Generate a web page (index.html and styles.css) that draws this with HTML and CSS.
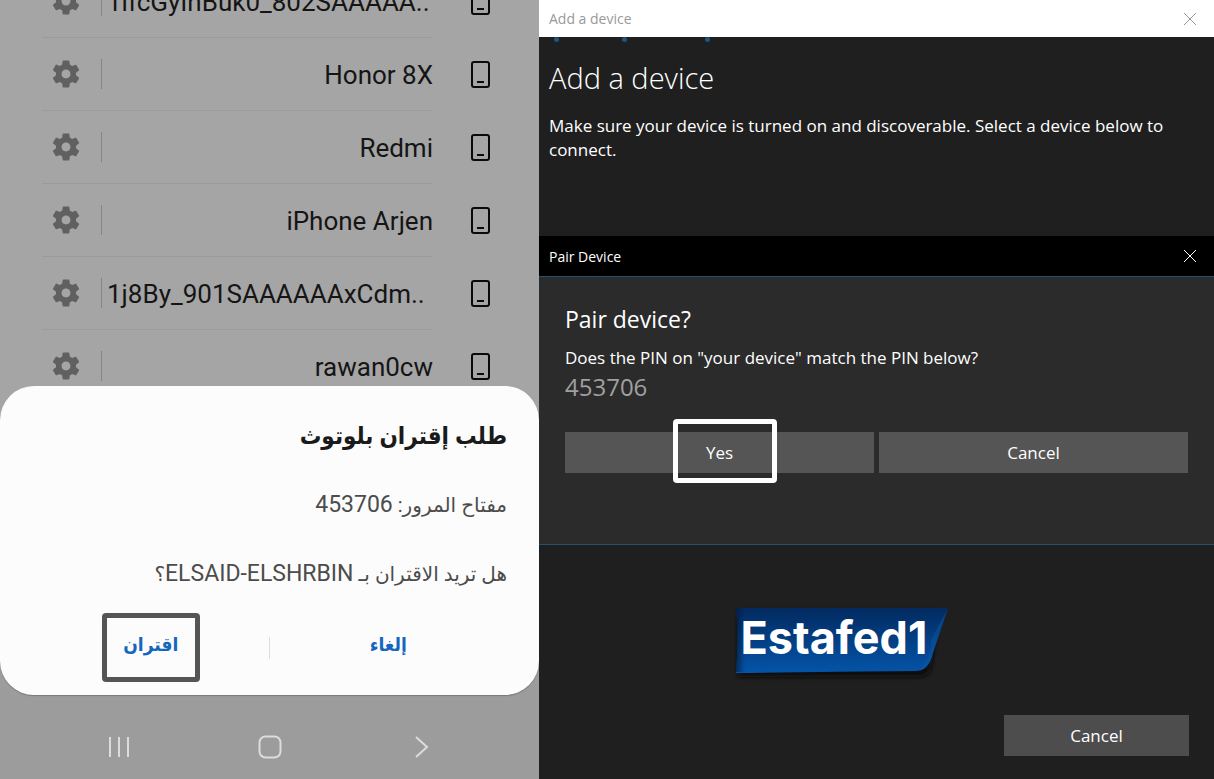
FILE: index.html
```html
<!DOCTYPE html>
<html lang="en">

<head>
  <meta charset="UTF-8" />
  <meta name="viewport" content="width=device-width, initial-scale=1" />
  <title>Pair Device</title>
  <link rel="stylesheet" href="styles.css">
</head>

<body>
  <svg class="sprite" aria-hidden="true">
    <symbol id="gear" viewBox="2 2 20 20">
      <path d="M19.14 12.94c.04-.3.06-.61.06-.94 0-.32-.02-.64-.07-.94l2.03-1.58c.18-.14.23-.41.12-.61l-1.92-3.32c-.12-.22-.37-.29-.59-.22l-2.39.96c-.5-.38-1.03-.7-1.62-.94l-.36-2.54c-.04-.24-.24-.41-.48-.41h-3.84c-.24 0-.43.17-.47.41l-.36 2.54c-.59.24-1.13.57-1.62.94l-2.39-.96c-.22-.08-.47 0-.59.22L2.74 8.87c-.12.21-.08.47.12.61l2.03 1.58c-.05.3-.09.63-.09.94s.02.64.07.94l-2.03 1.58c-.18.14-.23.41-.12.61l1.92 3.32c.12.22.37.29.59.22l2.39-.96c.5.38 1.03.7 1.62.94l.36 2.54c.05.24.24.41.48.41h3.84c.24 0 .44-.17.47-.41l.36-2.54c.59-.24 1.13-.56 1.62-.94l2.39.96c.22.08.47 0 .59-.22l1.92-3.32c.12-.22.07-.47-.12-.61l-2.01-1.58zM12 15.2c-1.760 0-3.200-1.440-3.200-3.200s1.440-3.200 3.200-3.200 3.200 1.440 3.200 3.200-1.440 3.200-3.200 3.200z" />
    </symbol>
    <symbol id="phone-icon" viewBox="0 0 20 28">
      <rect x="1" y="1" width="17" height="25" rx="2" fill="none" stroke="#0a0a0a" stroke-width="2" />
      <path d="M6 21h7" stroke="#0a0a0a" stroke-width="2" />
    </symbol>
    <symbol id="close" viewBox="0 0 14 14">
      <path d="M1 1l12 12M13 1L1 13" fill="none" stroke="currentColor" />
    </symbol>
  </svg>

  <main class="screens">
    <section class="phone">
      <ul class="devices">
        <li class="device">
          <div class="device-main">
            <button class="gear" aria-label="Settings"><svg><use href="#gear" /></svg></button>
            <span class="device-name long">1lfcGyIhBuk0_802SAAAAA..</span>
          </div>
          <svg class="device-icon"><use href="#phone-icon" /></svg>
        </li>
        <li class="device">
          <div class="device-main">
            <button class="gear" aria-label="Settings"><svg><use href="#gear" /></svg></button>
            <span class="device-name">Honor 8X</span>
          </div>
          <svg class="device-icon"><use href="#phone-icon" /></svg>
        </li>
        <li class="device">
          <div class="device-main">
            <button class="gear" aria-label="Settings"><svg><use href="#gear" /></svg></button>
            <span class="device-name">Redmi</span>
          </div>
          <svg class="device-icon"><use href="#phone-icon" /></svg>
        </li>
        <li class="device">
          <div class="device-main">
            <button class="gear" aria-label="Settings"><svg><use href="#gear" /></svg></button>
            <span class="device-name">iPhone Arjen</span>
          </div>
          <svg class="device-icon"><use href="#phone-icon" /></svg>
        </li>
        <li class="device">
          <div class="device-main">
            <button class="gear" aria-label="Settings"><svg><use href="#gear" /></svg></button>
            <span class="device-name long">1j8By_901SAAAAAAxCdm..</span>
          </div>
          <svg class="device-icon"><use href="#phone-icon" /></svg>
        </li>
        <li class="device">
          <div class="device-main">
            <button class="gear" aria-label="Settings"><svg><use href="#gear" /></svg></button>
            <span class="device-name">rawan0cw</span>
          </div>
          <svg class="device-icon"><use href="#phone-icon" /></svg>
        </li>
      </ul>

      <div class="sheet" lang="ar" dir="rtl">
        <h2>طلب إقتران بلوتوث</h2>
        <p>مفتاح المرور: <span class="latin">453706</span></p>
        <p>هل تريد الاقتران بـ <span class="latin">ELSAID-ELSHRBIN</span>؟</p>
        <div class="sheet-actions">
          <button>إلغاء</button>
          <button class="marked">اقتران</button>
        </div>
      </div>

      <nav class="phone-nav">
        <button aria-label="Recents">
          <svg width="24" height="24" viewBox="0 0 24 24"><path d="M3 2v20M12 2v20M21 2v20" /></svg>
        </button>
        <button aria-label="Home">
          <svg width="24" height="24" viewBox="0 0 24 24"><rect x="1.500" y="1.500" width="21" height="21" rx="6" /></svg>
        </button>
        <button aria-label="Back">
          <svg width="24" height="24" viewBox="0 0 24 24"><path d="M7 2l11 10L7 22" /></svg>
        </button>
      </nav>
    </section>

    <section class="window">
      <header class="titlebar">
        <span>Add a device</span>
        <button aria-label="Close"><svg><use href="#close" /></svg></button>
      </header>

      <div class="intro">
        <!-- progress dots running along the top edge -->
        <div class="dots"><i></i><i></i><i></i></div>
        <h1>Add a device</h1>
        <p>Make sure your device is turned on and discoverable. Select a device below to connect.</p>
      </div>

      <div class="pair">
        <header class="pair-bar">
          <span>Pair Device</span>
          <button aria-label="Close"><svg><use href="#close" /></svg></button>
        </header>
        <div class="pair-body">
          <h2>Pair device?</h2>
          <p>Does the PIN on "your device" match the PIN below?</p>
          <p class="pin">453706</p>
          <div class="pair-actions">
            <button class="btn yes">Yes</button>
            <button class="btn">Cancel</button>
          </div>
        </div>
      </div>

      <footer class="window-footer">
        <div class="logo">
          <svg viewBox="0 0 214 72" aria-hidden="true">
            <defs>
              <linearGradient id="blue" x1="0" y1="0" x2="0" y2="1">
                <stop offset="0" stop-color="#032a60" />
                <stop offset="1" stop-color="#0454a8" />
              </linearGradient>
              <linearGradient id="edge" x1="0" y1="0" x2="1" y2="0">
                <stop offset="0" stop-color="#021a3c" stop-opacity="0.7" />
                <stop offset="1" stop-color="#021a3c" stop-opacity="0" />
              </linearGradient>
              <filter id="soft" x="-10%" y="-20%" width="120%" height="150%">
                <feGaussianBlur stdDeviation="2" />
              </filter>
            </defs>
            <path d="M3 4h202l-9 58q-3 8-12 8H3z" fill="#0c0c0c" filter="url(#soft)" />
            <path d="M1 1H213L198 46Q194 64 180 64Q90 65 1 66Q4 30 1 1z" fill="url(#blue)" />
            <path d="M1 1H10V65H1Q4 30 1 1z" fill="url(#edge)" />
            <path d="M213 1L198 46Q194 62 184 64Q197 50 196 33Z" fill="#0b5cb0" opacity="0.4" />
          </svg>
          <span>Estafed1</span>
        </div>
        <button class="btn">Cancel</button>
      </footer>
    </section>
  </main>
</body>

</html>
```
FILE: styles.css
```css
* {
  box-sizing: border-box;
}

body {
  margin: 0;
}

h1,
h2,
p,
ul {
  margin: 0;
  padding: 0;
}

button {
  border: 0;
  padding: 0;
  background: none;
  font: inherit;
  color: inherit;
}

.sprite {
  display: none;
}

.screens {
  display: grid;
  grid-template-columns: 539fr 675fr;
  min-height: 100vh;
}

/* phone */

.phone {
  position: relative;
  display: flex;
  flex-direction: column;
  justify-content: space-between;
  overflow: hidden;
  background: linear-gradient(#a5a5a5 50%, #9c9c9c 90%);
  font-family: Roboto, "DejaVu Sans Condensed", "DejaVu Sans", sans-serif;
}

/* list is scrolled by half a row */
.devices {
  margin-top: -35px;
  list-style: none;
}

.device {
  display: flex;
  align-items: center;
  height: 73px;
  padding: 0 48px 0 42px;
}

.device-main {
  flex: 1;
  display: flex;
  align-items: center;
  height: 100%;
  min-width: 0;
  border-bottom: 1px solid #9b9b9b;
}

.gear {
  display: flex;
  padding: 0 21px 0 10px;
  height: 30px;
  align-items: center;
  border-right: 1px solid #858585;
}

.gear svg {
  width: 28px;
  height: 28px;
  fill: #606060;
}

.device-name {
  flex: 1;
  padding-top: 2px;
  font-size: 26px;
  text-align: right;
  white-space: nowrap;
  color: #151515;
}

.device-name.long {
  padding-left: 5px;
  text-align: left;
}

.device-icon {
  flex: none;
  width: 20px;
  height: 28px;
  margin-left: 38px;
}

.sheet {
  position: absolute;
  left: 0;
  right: 0;
  bottom: 84px;
  padding: 32px 32px 13px;
  border-radius: 34px;
  background: #fcfcfc;
  box-shadow: 0 1px 1px #777;
  color: #4c4c4c;
}

.sheet h2 {
  font-size: 24px;
  line-height: 36px;
  color: #1a1a1a;
}

.sheet p {
  margin-top: 33px;
  font-family: Roboto, "DejaVu Sans", sans-serif;
  font-size: 20px;
  line-height: 36px;
}

.sheet .latin {
  font-size: 23px;
}

.sheet-actions {
  display: grid;
  grid-template-columns: 1fr 1fr;
  justify-items: center;
  margin-top: 21px;
  background: linear-gradient(#ddd, #ddd) center / 1px 22px no-repeat;
  font-size: 19px;
  font-weight: bold;
  color: #1567bd;
}

.sheet-actions button {
  min-width: 98px;
  height: 69px;
  padding-bottom: 6px;
}

.sheet-actions .marked {
  border: 5px solid #555;
  border-radius: 4px;
}

.phone-nav {
  display: grid;
  grid-template-columns: repeat(3, 1fr);
  justify-items: center;
  padding: 0 43px 20px;
}

.phone-nav button {
  display: flex;
}

.phone-nav svg {
  fill: none;
  stroke: #dcdcdc;
  stroke-width: 2;
}

/* desktop window */

.window {
  display: flex;
  flex-direction: column;
  background: #1f1f1f;
  font-family: "Open Sans", "Noto Sans", sans-serif;
  color: #fff;
}

.titlebar,
.pair-bar {
  display: flex;
  align-items: center;
  justify-content: space-between;
  padding: 0 17px 0 10px;
  font-size: 14px;
}

.titlebar {
  height: 37px;
  background: #fff;
  color: #999;
}

.titlebar button,
.pair-bar button {
  display: flex;
}

.titlebar svg,
.pair-bar svg {
  width: 14px;
  height: 14px;
}

.intro {
  height: 199px;
  padding: 0 40px 0 10px;
}

.dots {
  display: grid;
  grid-template-columns: 68px 83px 5px;
  height: 21px;
  padding-left: 5px;
}

.dots i {
  width: 5px;
  height: 5px;
  border-radius: 50%;
  background: #1d5580;
}

.intro h1 {
  font-size: 29px;
  font-weight: 300;
  line-height: 40px;
}

.intro p {
  margin-top: 16px;
  font-size: 17px;
  line-height: 24px;
}

.pair {
  border-bottom: 1px solid #27506e;
  background: #2b2b2b;
}

.pair-bar {
  height: 41px;
  border-bottom: 1px solid #27506e;
  background: #000;
}

.pair-body {
  padding: 24px 26px 71px;
}

.pair-body h2 {
  font-size: 23px;
  font-weight: 400;
  line-height: 36px;
}

.pair-body p {
  margin-top: 8px;
  font-size: 17px;
  line-height: 26px;
}

.pair-body .pin {
  margin-top: 0;
  font-size: 24px;
  line-height: 32px;
  color: #a0a0a0;
}

.pair-actions {
  display: grid;
  grid-template-columns: 1fr 1fr;
  gap: 5px;
  margin-top: 29px;
}

.btn {
  height: 41px;
  background: #555;
  font-size: 17px;
}

.yes {
  position: relative;
}

/* marker frame drawn over the button */
.yes::after {
  content: "";
  position: absolute;
  top: -13px;
  bottom: -10px;
  left: 35%;
  width: 94px;
  border: 5px solid #fff;
  border-radius: 4px;
}

.window-footer {
  flex: 1;
  display: flex;
  flex-direction: column;
  justify-content: space-between;
  padding: 62px 25px 23px;
}

.logo {
  display: grid;
  align-self: center;
  width: 214px;
  margin-right: 70px;
}

.logo svg,
.logo span {
  grid-area: 1 / 1;
}

.logo span {
  padding-left: 6px;
  font-family: Inter, sans-serif;
  font-size: 45px;
  font-weight: bold;
  line-height: 62px;
}

.logo svg {
  width: 214px;
  height: 72px;
  overflow: visible;
}

.window-footer .btn {
  align-self: flex-end;
  width: 185px;
  background: #4d4d4d;
}
```
